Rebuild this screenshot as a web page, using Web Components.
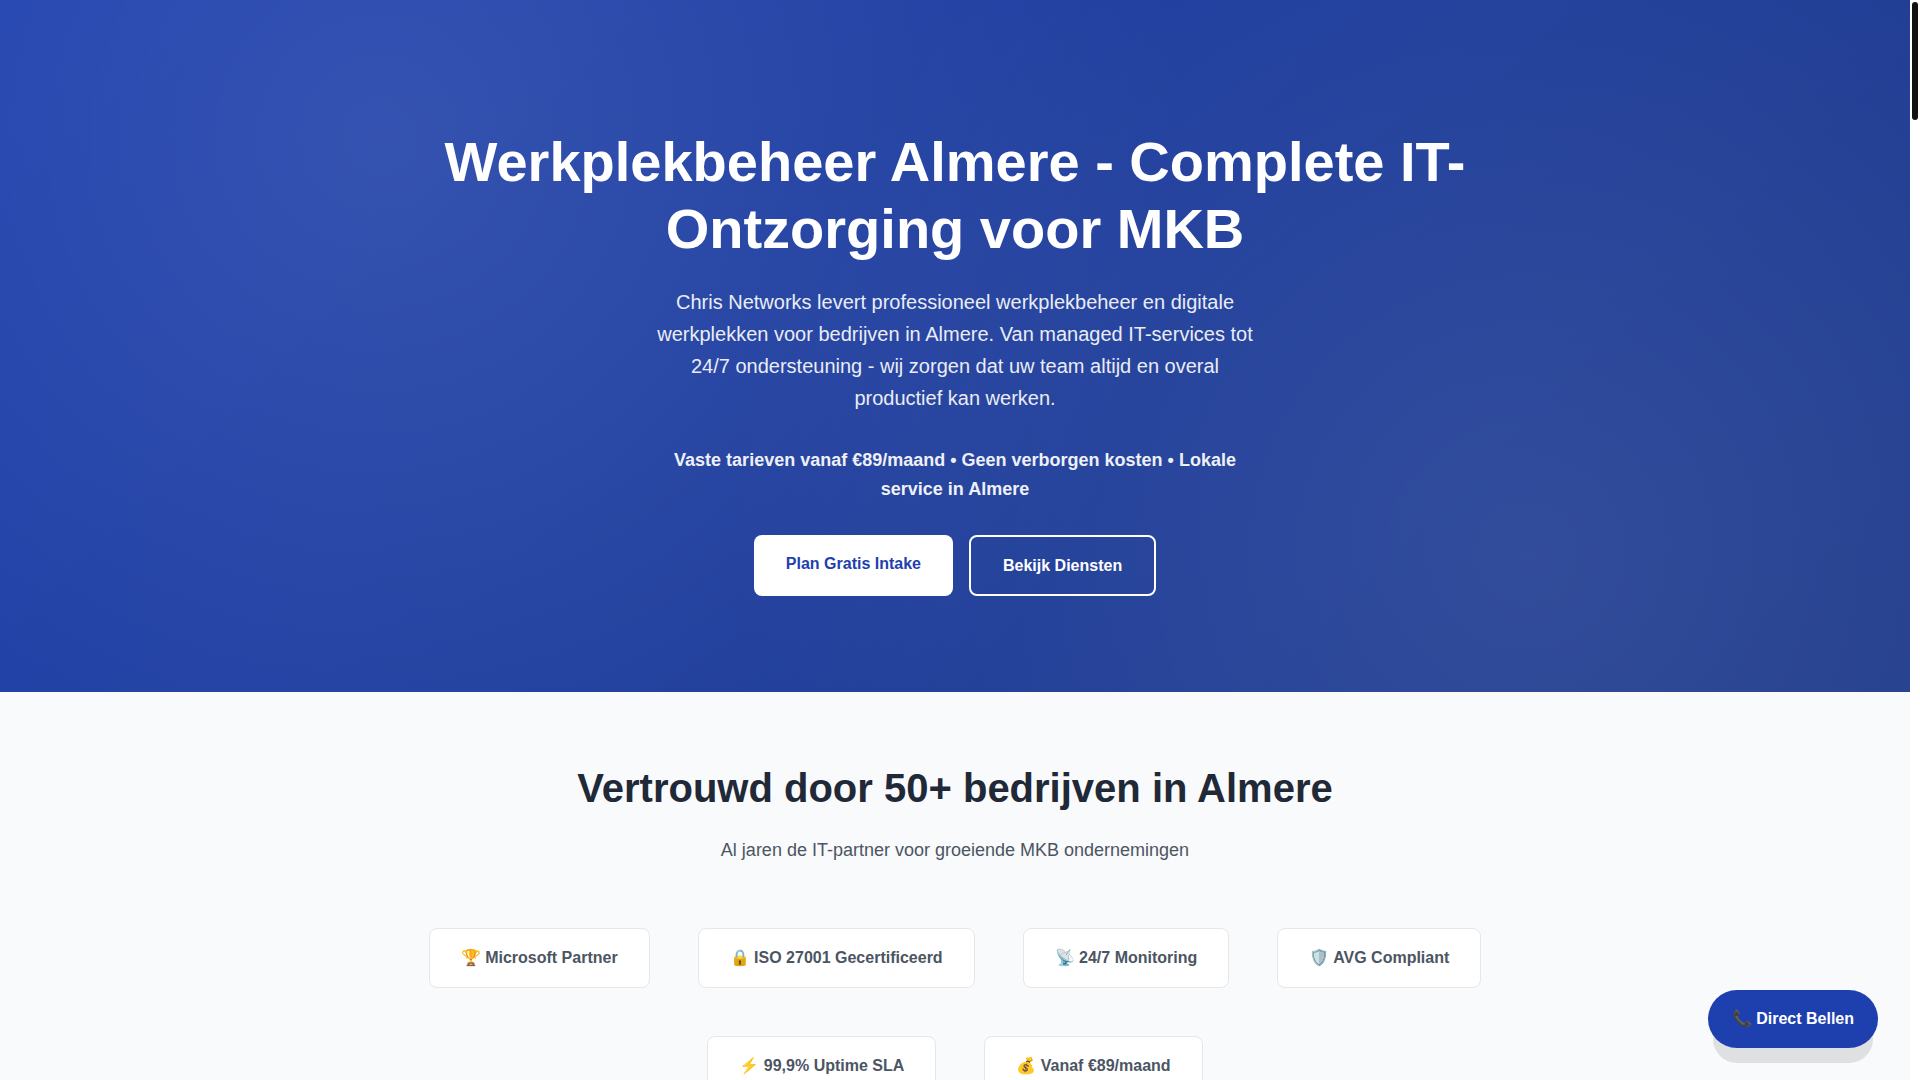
<!DOCTYPE html>
<html lang="nl">
<head>
<meta charset="utf-8">
<title>Werkplekbeheer Almere</title>
<style>
html, body { margin: 0; height: 100%; overflow: hidden; }
body { font: 16px/26px "Liberation Sans", Arial, sans-serif; color: #1f2937; background: #fff; }
</style>
</head>
<body>
<site-shell>
  <hero-banner>
    <span slot="title">Werkplekbeheer Almere - Complete IT-Ontzorging voor MKB</span>
    <span slot="lead">Chris Networks levert professioneel werkplekbeheer en digitale werkplekken voor bedrijven in Almere. Van managed IT-services tot 24/7 ondersteuning - wij zorgen dat uw team altijd en overal productief kan werken.</span>
    <span slot="offer">Vaste tarieven vanaf €89/maand • Geen verborgen kosten • Lokale service in Almere</span>
    <cta-link slot="actions" href="#contact">Plan Gratis Intake</cta-link>
    <cta-link slot="actions" href="#diensten" outline>Bekijk Diensten</cta-link>
  </hero-banner>
  <trust-section>
    <span slot="title">Vertrouwd door 50+ bedrijven in Almere</span>
    <span slot="subtitle">Al jaren de IT-partner voor groeiende MKB ondernemingen</span>
    <trust-badge>🏆 Microsoft Partner</trust-badge>
    <trust-badge>🔒 ISO 27001 Gecertificeerd</trust-badge>
    <trust-badge>📡 24/7 Monitoring</trust-badge>
    <trust-badge>🛡️ AVG Compliant</trust-badge>
    <trust-badge>⚡ 99,9% Uptime SLA</trust-badge>
    <trust-badge>💰 Vanaf €89/maand</trust-badge>
  </trust-section>
  <call-button slot="floating" href="#bellen">📞 Direct Bellen</call-button>
</site-shell>
<script>
const define = (name, html, setup) => {
  const template = document.createElement('template');
  template.innerHTML = html;
  customElements.define(name, class extends HTMLElement {
    constructor() {
      super();
      this.attachShadow({ mode: 'open' }).append(template.content.cloneNode(true));
    }
    connectedCallback() { if (setup) setup(this, this.shadowRoot); }
  });
};
const setHref = (host, root) => { root.querySelector('a').href = host.getAttribute('href'); };

define('site-shell', `
<style>
:host { display: flex; height: 100vh; overflow: hidden; position: relative; }
main { flex: 1; min-width: 0; overflow: hidden; background: #f9fafb; }
.track { width: 10px; box-sizing: border-box; padding: 2px; background: #fff; }
.thumb { height: 11%; border-radius: 3px; background: #111; }
</style>
<main><slot></slot></main>
<div class="track" aria-hidden="true"><div class="thumb"></div></div>
<slot name="floating"></slot>`);

define('hero-banner', `
<style>
:host {
  display: block; padding: 128px 32px 96px; text-align: center; color: #fff;
  background:
    radial-gradient(circle at 20% 20%, rgba(255,255,255,.1) 0%, transparent 50%),
    radial-gradient(circle at 80% 80%, rgba(255,255,255,.09) 0%, transparent 50%),
    linear-gradient(135deg, #1e40af 0%, #1e3a8a 100%);
}
h1 { max-width: 1136px; margin: 0 auto 24px; font-size: 56px; line-height: 67px; font-weight: 700; }
.lead { max-width: 600px; margin: 0 auto 32px; font-size: 20px; line-height: 32px; opacity: .9; }
.offer { max-width: 600px; margin: 0 auto 31px; font-size: 18px; line-height: 29px; font-weight: 600; opacity: .92; }
.actions { display: flex; flex-wrap: wrap; justify-content: center; gap: 16px; }
</style>
<h1><slot name="title"></slot></h1>
<p class="lead"><slot name="lead"></slot></p>
<p class="offer"><slot name="offer"></slot></p>
<div class="actions"><slot name="actions"></slot></div>`);

define('cta-link', `
<style>
:host { display: flex; }
a { padding: 16px 32px; border-radius: 8px; background: #fff; color: #1e40af; line-height: 25px; font-weight: 600; text-decoration: none; }
:host([outline]) a { border: 2px solid #fff; background: transparent; color: #fff; }
</style>
<a><slot></slot></a>`, setHref);

define('trust-section', `
<style>
:host { display: block; padding: 64px 32px; text-align: center; background: #f9fafb; }
h2 { margin: 0 0 16px; font-size: 40px; line-height: 64px; font-weight: 700; color: #1f2937; }
p { margin: 0 0 64px; font-size: 18px; line-height: 28px; color: #4b5563; }
.badges { display: flex; flex-wrap: wrap; justify-content: center; gap: 48px; max-width: 1136px; margin: 0 auto; }
</style>
<h2><slot name="title"></slot></h2>
<p><slot name="subtitle"></slot></p>
<div class="badges"><slot></slot></div>`);

define('trust-badge', `
<style>
:host { display: block; padding: 16px 31px; border: 1px solid #e5e7eb; border-radius: 8px; background: #fff; color: #4b5563; font-weight: 600; }
</style>
<slot></slot>`);

define('call-button', `
<style>
:host { position: absolute; right: 42px; bottom: 32px; }
a { display: block; padding: 16px 24px; border-radius: 50px; background: #1e40af; color: #fff; font-weight: 600; text-decoration: none; box-shadow: 0 20px 0 -5px rgba(0,0,0,.1); }
</style>
<a><slot></slot></a>`, setHref);
</script>
</body>
</html>
